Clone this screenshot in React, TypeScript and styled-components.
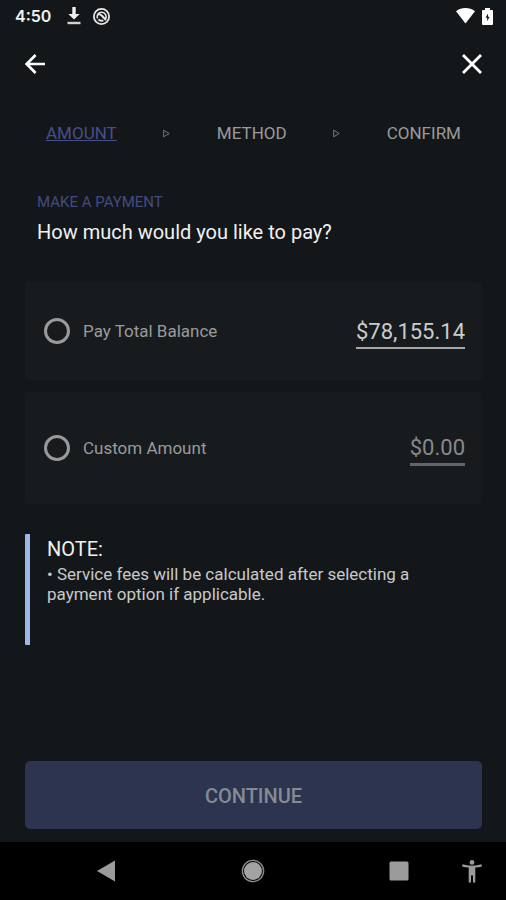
import React, { useState } from "react";
import styled, { createGlobalStyle } from "styled-components";

const GlobalStyle = createGlobalStyle`
  *, *::before, *::after { box-sizing: border-box; }
  body {
    margin: 0;
    background: #131719;
    font-family: Roboto, "Liberation Sans", sans-serif;
    color: #f1f1f1;
  }
  p, h1, h2 { margin: 0; font-weight: 400; }
  button, input { font: inherit; color: inherit; }
`;

const Screen = styled.div`
  min-height: 100vh;
  display: flex;
  flex-direction: column;
`;

const StatusBar = styled.div`
  height: 32px;
  padding: 0 13px 0 15px;
  display: flex;
  align-items: center;
  justify-content: space-between;
`;

const StatusGroup = styled.div<{ $gap: number }>`
  display: flex;
  align-items: center;
  gap: ${(p) => p.$gap}px;
`;

const Clock = styled.span`
  margin-right: 4px;
  font-family: Inter, Roboto, sans-serif;
  font-size: 16px;
  font-weight: 600;
  line-height: 20px;
`;

const Header = styled.header`
  height: 64px;
  padding: 0 14px 0 15px;
  display: flex;
  align-items: center;
  justify-content: space-between;
`;

const IconButton = styled.button`
  width: 40px;
  height: 40px;
  padding: 0;
  border: 0;
  background: none;
  display: grid;
  place-items: center;
`;

const Steps = styled.nav`
  margin-top: 25px;
  padding: 0 45px 0 46px;
  display: flex;
  align-items: center;
  justify-content: space-between;
`;

const Step = styled.a<{ $active?: boolean }>`
  font-size: 17px;
  line-height: 24px;
  color: ${(p) => (p.$active ? "#474f88" : "#999b9c")};
  text-decoration: ${(p) => (p.$active ? "underline" : "none")};
`;

const Main = styled.main`
  flex: 1;
  padding: 0 24px 13px 25px;
  display: flex;
  flex-direction: column;
`;

const Intro = styled.div`
  margin-top: 45px;
  padding-left: 12px;
`;

const Eyebrow = styled.p`
  font-size: 15px;
  line-height: 24px;
  color: #434b84;
`;

const Title = styled.h1`
  margin-top: 4px;
  font-size: 20px;
  line-height: 28px;
`;

const Options = styled.div`
  margin-top: 36px;
  display: flex;
  flex-direction: column;
  gap: 12px;
`;

const Option = styled.div<{ $tall?: boolean }>`
  padding: ${(p) => (p.$tall ? 38 : 31)}px 17px ${(p) => (p.$tall ? 38 : 31)}px 19px;
  display: flex;
  align-items: center;
  justify-content: space-between;
  border-radius: 4px;
  background: #171b1e;
`;

const Choice = styled.label`
  display: flex;
  align-items: center;
  gap: 13px;
  font-size: 17px;
  line-height: 24px;
  color: #999b9c;
`;

const Radio = styled.input`
  appearance: none;
  width: 26px;
  height: 26px;
  margin: 0;
  border: 3px solid #989a9b;
  border-radius: 50%;
  &:checked { background: radial-gradient(#989a9b 45%, transparent 50%); }
`;

const Amount = styled.input<{ $muted?: boolean }>`
  field-sizing: content;
  height: 36px;
  padding: 2px 0 0;
  border: 0;
  border-bottom: ${(p) => (p.$muted ? "3px solid #626465" : "2px solid #a5a7a8")};
  border-radius: 0;
  background: none;
  outline: 0;
  font-size: 22px;
  line-height: 30px;
  text-align: right;
  color: ${(p) => (p.$muted ? "#88898a" : "#cbcccd")};
`;

const Note = styled.aside`
  min-height: 111px;
  margin-top: 30px;
  padding: 3px 48px 0 17px;
  border-left: 5px solid #9bb8e9;
  border-radius: 1px;
`;

const NoteTitle = styled.h2`
  font-size: 20px;
  line-height: 24px;
`;

const NoteText = styled.p`
  margin-top: 3px;
  font-size: 17px;
  line-height: 20px;
  color: #c8c9ca;
`;

const Continue = styled.button`
  height: 68px;
  margin-top: auto;
  padding: 2px 0 0;
  border: 0;
  border-radius: 5px;
  background: #2d3450;
  font-size: 20px;
  font-weight: 500;
  color: #858b93;
`;

const SystemNav = styled.nav`
  height: 58px;
  background: #000;
  color: #9b9b9b;
  padding: 0 14px 0 86px;
  display: flex;
  align-items: center;
  justify-content: space-between;
`;

const NavPair = styled.div`
  display: flex;
  gap: 33px;
`;

const Arrow = () => (
  <svg width="7" height="9" viewBox="0 0 7 9" fill="none" stroke="#77797a" aria-hidden="true">
    <path d="M.7 1.2v6.6L6.2 4.5z" />
  </svg>
);

export default function App() {
  const [custom, setCustom] = useState("$0.00");
  return (
    <>
      <GlobalStyle />
      <Screen>
        <StatusBar>
          <StatusGroup $gap={12}>
            <Clock>4:50</Clock>
            <svg width="14" height="18" viewBox="0 0 14 18" aria-hidden="true">
              <path d="M5.3 0h3.4v7h4L7 12.6 1.3 7h4z" fill="#f1f1f1" />
              <path d="M.5 14.8h13v2.4H.5z" fill="#d2d3d3" />
            </svg>
            <svg width="17" height="19" viewBox="1 0 17 19" fill="none" stroke="#e6e6e6" aria-hidden="true">
              <circle cx="9.5" cy="9.5" r="7.6" strokeWidth="1.8" />
              <path d="M5.5 11.5a4.5 4.500 0 1 1 8 .5" strokeWidth="1.6" />
              <path d="M5.6 7.4q2.600-.6 4.300 1.400l4 4.200M6.400 12.600q2.300 1.900 4.900.7" strokeWidth="2" />
            </svg>
          </StatusGroup>
          <StatusGroup $gap={7}>
            <svg width="19" height="16" viewBox="0 0 19 16" aria-hidden="true">
              <path d="M0 3.3C5.4-1 13.6-1 19 3.3L9.5 15.6z" fill="#fff" />
            </svg>
            <svg width="11" height="17" viewBox="0 0 11 17" aria-hidden="true">
              <path d="M3 0h5v2h2q1 0 1 1v13q0 1-1 1H1q-1 0-1-1V3q0-1 1-1h2z" fill="#fff" />
              <path d="M6 5.500 3.600 9.800h1.600v3.400l2.400-4.400H6z" fill="#131719" />
            </svg>
          </StatusGroup>
        </StatusBar>
        <Header>
          <IconButton aria-label="Back">
            <svg width="20" height="20" viewBox="0 0 20 20" fill="none" stroke="#fff" strokeWidth="2.6" aria-hidden="true">
              <path d="M20 10H2M10.6 1 1.7 10l8.9 9" />
            </svg>
          </IconButton>
          <IconButton aria-label="Close">
            <svg width="20" height="20" viewBox="0 0 20 20" fill="none" stroke="#fff" strokeWidth="2.8" aria-hidden="true">
              <path d="m1 1 18 18M19 1 1 19" />
            </svg>
          </IconButton>
        </Header>
        <Steps aria-label="Payment steps">
          <Step href="#amount" $active aria-current="step">AMOUNT</Step>
          <Arrow />
          <Step href="#method">METHOD</Step>
          <Arrow />
          <Step href="#confirm">CONFIRM</Step>
        </Steps>
        <Main>
          <Intro>
            <Eyebrow>MAKE A PAYMENT</Eyebrow>
            <Title>How much would you like to pay?</Title>
          </Intro>
          <Options>
            <Option>
              <Choice>
                <Radio type="radio" name="payment" value="total" />
                Pay Total Balance
              </Choice>
              <Amount aria-label="Total balance" value="$78,155.14" readOnly />
            </Option>
            <Option $tall>
              <Choice>
                <Radio type="radio" name="payment" value="custom" />
                Custom Amount
              </Choice>
              <Amount
                $muted
                aria-label="Custom amount"
                value={custom}
                onChange={(e) => setCustom(e.target.value)}
              />
            </Option>
          </Options>
          <Note>
            <NoteTitle>NOTE:</NoteTitle>
            <NoteText>• Service fees will be calculated after selecting a payment option if applicable.</NoteText>
          </Note>
          <Continue type="button">CONTINUE</Continue>
        </Main>
        <SystemNav aria-label="System">
          <IconButton aria-label="System back">
            <svg width="20" height="22" viewBox="0 0 20 22" fill="currentColor" aria-hidden="true">
              <path d="M19 .5v21L1 11z" />
            </svg>
          </IconButton>
          <IconButton aria-label="Home">
            <svg width="24" height="24" viewBox="0 0 24 24" aria-hidden="true">
              <circle cx="12" cy="12" r="10.6" fill="none" stroke="#8a8a8a" strokeWidth="1.4" />
              <circle cx="12" cy="12" r="9" fill="#a3a3a3" />
            </svg>
          </IconButton>
          <NavPair>
            <IconButton aria-label="Recent apps">
              <svg width="20" height="20" viewBox="0 0 20 20" fill="currentColor" aria-hidden="true">
                <rect x=".5" y=".5" width="19" height="19" rx="1.5" />
              </svg>
            </IconButton>
            <IconButton aria-label="Accessibility">
              <svg width="20" height="23" viewBox="0 0 20 23" fill="currentColor" aria-hidden="true">
                <circle cx="10" cy="2.4" r="2.4" />
                <path d="M.5 4.3C6.5 6.2 13.5 6.2 19.5 4.3L20 6.4Q17 7.2 13.3 7.6V22.5H11V15.5H9V22.5H6.7V7.6Q3 7.2 0 6.4Z" />
              </svg>
            </IconButton>
          </NavPair>
        </SystemNav>
      </Screen>
    </>
  );
}
